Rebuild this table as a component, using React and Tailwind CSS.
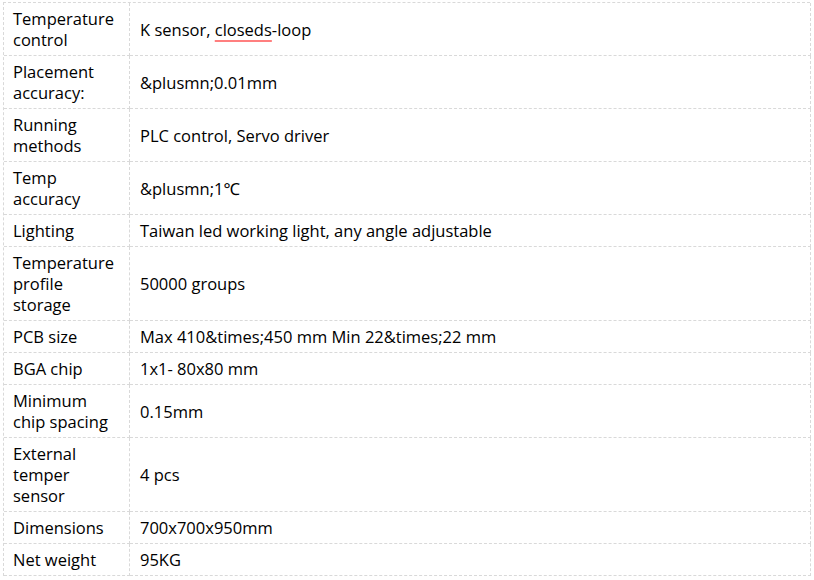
import React from "react";

const rows = [
  [["Temperature", "control"], "closed"],
  [["Placement", "accuracy:"], "&plusmn;0.01mm"],
  [["Running", "methods"], "PLC control, Servo driver"],
  [["Temp", "accuracy"], "&plusmn;1℃"],
  [["Lighting"], "Taiwan led working light, any angle adjustable"],
  [["Temperature", "profile", "storage"], "50000 groups"],
  [["PCB size"], "Max 410&times;450 mm Min 22&times;22 mm"],
  [["BGA chip"], "1x1- 80x80 mm"],
  [["Minimum", "chip spacing"], "0.15mm"],
  [["External", "temper", "sensor"], "4 pcs"],
  [["Dimensions"], "700x700x950mm"],
  [["Net weight"], "95KG"],
];

export default function App() {
  return (
    <div
      className="bg-white w-[814px] h-[580px] pt-[2px] pl-[3px] text-black text-[16.5px] leading-[21px]"
      style={{ fontFamily: '"Open Sans", "Noto Sans", sans-serif' }}
    >
      <div className="w-[807px] border-t border-l border-dashed border-[#d9d9d9] grid grid-cols-[126px_681px]">
        {rows.map(([label, value], i) => (
          <React.Fragment key={i}>
            <div className="border-r border-b border-dashed border-[#d9d9d9] py-[5px] pl-[9px] pr-[2px] flex flex-col justify-center">
              {label.map((l, j) => (
                <span key={j} className="whitespace-nowrap">{l}</span>
              ))}
            </div>
            <div className="border-r border-b border-dashed border-[#d9d9d9] py-[5px] pl-[10px] flex items-center">
              {value === "closed" ? (
                <span>
                  K sensor,{" "}
                  <span className="underline decoration-[#ff7f7f] decoration-2 underline-offset-[4px]">closeds</span>
                  -loop
                </span>
              ) : (
                <span>{value}</span>
              )}
            </div>
          </React.Fragment>
        ))}
      </div>
    </div>
  );
}
